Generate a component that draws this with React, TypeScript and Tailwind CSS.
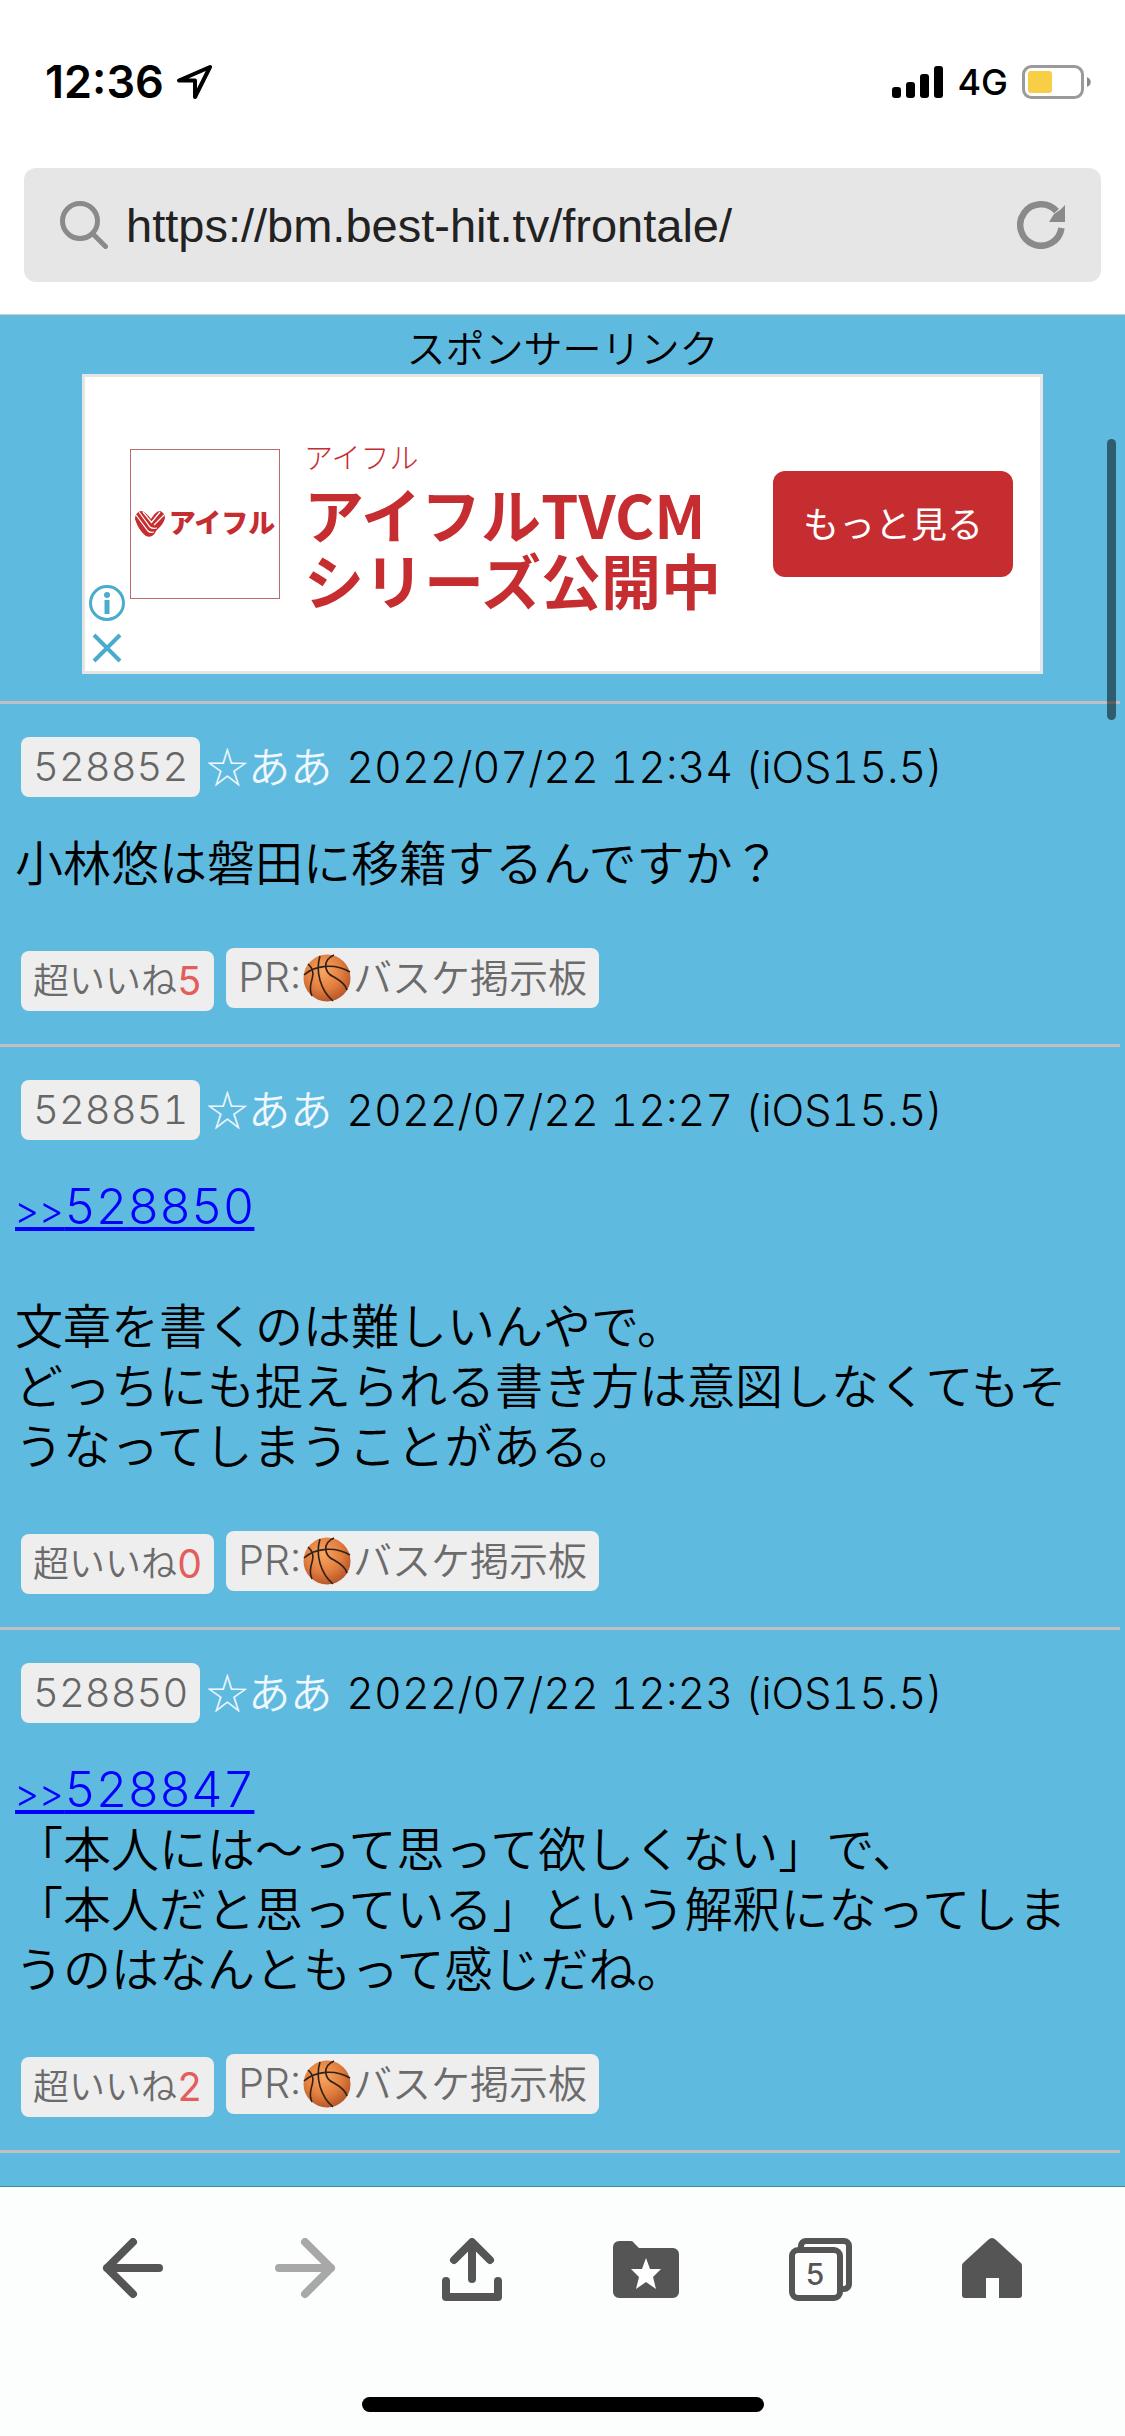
import type { ReactNode } from 'react'

type Post = {
  id: number
  name: string
  date: string
  device: string
  replyTo?: number
  body: string
  likes: number
}

const posts: Post[] = [
  {
    id: 528852,
    name: '☆ああ',
    date: '2022/07/22 12:34',
    device: 'iOS15.5',
    body: '小林悠は磐田に移籍するんですか？',
    likes: 5
  },
  {
    id: 528851,
    name: '☆ああ',
    date: '2022/07/22 12:27',
    device: 'iOS15.5',
    replyTo: 528850,
    body: '\n文章を書くのは難しいんやで。\nどっちにも捉えられる書き方は意図しなくてもそうなってしまうことがある。',
    likes: 0
  },
  {
    id: 528850,
    name: '☆ああ',
    date: '2022/07/22 12:23',
    device: 'iOS15.5',
    replyTo: 528847,
    body: '「本人には〜って思って欲しくない」で、\n「本人だと思っている」という解釈になってしまうのはなんともって感じだね。',
    likes: 2
  }
]

function Basketball() {
  return (
    <svg role="img" aria-label="バスケットボール" viewBox="0 0 48 48" className="mx-0.5 size-12 shrink-0">
      <defs>
        <radialGradient id="ball" cx="0.42" cy="0.35" r="0.65">
          <stop offset="0" stopColor="#f9a660" />
          <stop offset="0.6" stopColor="#e27e3e" />
          <stop offset="1" stopColor="#b9582a" />
        </radialGradient>
      </defs>
      <circle cx="24" cy="24" r="23.5" fill="url(#ball)" />
      <g fill="none" stroke="#2f2019" strokeWidth="1.6">
        <path d="M1 21C12 11 32 9 47 18" />
        <path d="M17 2C12 18 18 37 30 47" />
        <path d="M31 1C19 6 21 19 31 23C38 27 43 31 44 36" />
        <path d="M5 10C12 16 10 22 8 29C7 34 7 38 9 42" />
      </g>
    </svg>
  )
}

function StatusBar() {
  return (
    <div className="flex h-[168px] items-center justify-between pr-[34px] pb-1 pl-[45px] text-black">
      <div className="flex items-center gap-3">
        <span className="text-[45px] font-semibold">12:36</span>
        <svg viewBox="0 0 36 36" className="size-9" fill="none" stroke="currentColor" strokeWidth="4" strokeLinejoin="round">
          <path d="M34 3 3 16.5H19V33Z" />
        </svg>
      </div>
      <div className="flex items-center">
        <svg viewBox="0 0 51 32" className="h-8 w-[51px]" fill="currentColor">
          <rect x="0" y="21" width="9" height="11" rx="3" />
          <rect x="14" y="16" width="9" height="16" rx="3" />
          <rect x="28" y="8" width="9" height="24" rx="3" />
          <rect x="42" y="0" width="9" height="32" rx="3" />
        </svg>
        <span className="ml-3.5 text-[36px] font-medium">4G</span>
        <svg viewBox="0 0 69 34" className="ml-3.5 h-[34px] w-[69px]">
          <rect x="1.5" y="1.5" width="59" height="31" rx="8" fill="none" stroke="#9a9a9a" strokeWidth="3" />
          <rect x="6" y="6" width="24" height="22" rx="3" fill="#f7ce46" />
          <path d="M65 12c5 2 5 8 0 10z" fill="#8a8a8a" />
        </svg>
      </div>
    </div>
  )
}

function AddressBar() {
  return (
    <div className="mx-6 mb-8 flex h-[114px] items-center rounded-xl bg-[#e6e6e6] px-9 text-[#8a8a8a]">
      <svg viewBox="0 0 48 48" className="size-12 shrink-0" fill="none" stroke="currentColor" strokeWidth="5" strokeLinecap="round">
        <circle cx="20" cy="20" r="17.5" />
        <path d="m33 33 12.5 12.5" />
      </svg>
      <input
        type="text"
        aria-label="URL"
        defaultValue="https://bm.best-hit.tv/frontale/"
        className="ml-[18px] min-w-0 flex-1 bg-transparent pt-0.5 font-['Liberation_Sans',sans-serif] text-[47px] text-[#222] outline-none"
      />
      <button aria-label="再読み込み" className="shrink-0">
        <svg viewBox="0 0 48 48" className="size-12">
          <path d="M44.5 27A20.75 20.75 0 1 1 39.5 10.2" fill="none" stroke="currentColor" strokeWidth="6.5" />
          <path d="M48 4v17H32l5-8 6-4z" fill="currentColor" />
        </svg>
      </button>
    </div>
  )
}

function AifulMark() {
  return (
    <svg viewBox="0 0 30 26" className="h-[26px] w-[30px] shrink-0" fill="none">
      <path
        d="M6 0C2 1 0 4 0 8c2 7 6 13 11 17 2 1 4 1 6 0 2-1 3-3 4-5 4-4 8-8 9-13 0-3-2-6-5-7-3 0-6 3-9 8C13 4 9 0 6 0Z"
        fill="#c62d30"
      />
      <path d="M1 4 13 20q2 2 6 1M4 1 15 16q2 2 7 1M8 1 17 12M16 12 25 1M19 14 29 4" stroke="#fff" strokeWidth="1.2" />
    </svg>
  )
}

function AdBanner() {
  return (
    <section className="relative mx-[82px] flex h-[300px] items-center border-[3px] border-[#e5e5e5] bg-white pr-[27px] pl-[45px] font-['Noto_Sans_CJK_JP',sans-serif] text-[#c62d30]">
      <div className="flex size-[150px] shrink-0 items-center justify-center gap-1 border border-[#c0696c]">
        <AifulMark />
        <span className="pb-1 text-[27px] font-black">アイフル</span>
      </div>
      <div className="ml-6 flex-1 pb-0.5">
        <p className="mb-0.5 text-[29px] leading-[44px] font-light">アイフル</p>
        <p className="text-[60px] leading-[66px] font-bold whitespace-nowrap">
          アイフルTVCM
          <br />
          シリーズ公開中
        </p>
      </div>
      <button className="h-[106px] w-[240px] shrink-0 rounded-xl bg-[#c62d30] pb-1 text-[36px] text-white">もっと見る</button>
      <div className="absolute bottom-2 left-1 flex flex-col items-center gap-3 text-[#4aaccc]">
        <button aria-label="広告について">
          <svg viewBox="0 0 36 36" className="size-9" fill="none" stroke="currentColor">
            <circle cx="18" cy="18" r="16.5" strokeWidth="3" />
            <circle cx="18" cy="10" r="3" fill="currentColor" stroke="none" />
            <path d="M18 15v14" strokeWidth="5" />
          </svg>
        </button>
        <button aria-label="広告を閉じる">
          <svg viewBox="0 0 30 30" className="size-[30px]" fill="none" stroke="currentColor" strokeWidth="4">
            <path d="m2 2 26 26M28 2 2 28" />
          </svg>
        </button>
      </div>
    </section>
  )
}

function PostItem({ post }: { post: Post }) {
  return (
    <article className="mr-[5px] border-t-[3px] border-[#c0c0c0] pt-[33px] pb-[33px] font-[350] tabular-nums">
      <header className="flex h-[60px] items-center pl-[21px]">
        <button className="h-[60px] rounded-lg bg-[#eee] px-3 text-[40px] font-light text-[#666]">{post.id}</button>
        <span className="ml-1.5 pb-1.5 font-['Noto_Sans_CJK_JP',sans-serif] text-[42px] text-[#f0f8ff]">{post.name}</span>
        <time className="ml-3.5 text-[43px] font-light text-black">
          {post.date} ({post.device})
        </time>
      </header>

      <div className="mt-[37px] px-[15px] text-[48px] leading-[60px] whitespace-pre-wrap text-black">
        {post.replyTo && (
          <a href={`#${post.replyTo}`} className="block h-[60px] w-fit text-[49px] font-light text-[#00f] underline">
            <span className="text-[38px] leading-none">&gt;&gt;</span>
            {post.replyTo}
          </a>
        )}
        <p>{post.body}</p>
      </div>

      <footer className="mt-[54px] flex h-[63px] gap-3 pl-[21px] text-[#6b6b6b]">
        <button className="flex h-[60px] items-center self-end rounded-lg bg-[#eee] px-3 text-[36px]">
          超いいね<span className="text-[39px] font-normal text-[#e35d5b]">{post.likes}</span>
        </button>
        <a href="#basketball" className="flex h-[60px] items-center rounded-lg bg-[#eee] px-3 text-[39px]">
          <span className="text-[41px] font-light">PR:</span>
          <Basketball />
          <span>バスケ掲示板</span>
        </a>
      </footer>
    </article>
  )
}

function ToolButton({ label, disabled, children }: { label: string; disabled?: boolean; children: ReactNode }) {
  return (
    <button aria-label={label} disabled={disabled} className="flex flex-1 justify-center text-[#555] disabled:text-[#a8a8a8]">
      <svg viewBox="0 0 72 64" className="h-16 w-[72px]" fill="none" stroke="currentColor" strokeWidth="8" strokeLinecap="round" strokeLinejoin="round">
        {children}
      </svg>
    </button>
  )
}

function Toolbar() {
  return (
    <nav className="border-t border-[#4089a5] bg-[#fcfdfd] pb-6">
      <div className="flex px-[47px] pt-[51px]">
        <ToolButton label="戻る">
          <path d="M36 4 10 30l26 26M10 30h52" />
        </ToolButton>
        <ToolButton label="進む" disabled>
          <path d="m36 4 26 26-26 26M62 30H10" />
        </ToolButton>
        <ToolButton label="共有">
          <path d="M31 5v36M13 22 31 4l18 18M5 43v16h52V43" />
        </ToolButton>
        <ToolButton label="ブックマーク">
          <path
            d="M7 3h12q2 0 3 2L27 10h34a6 6 0 0 1 6 6v38a6 6 0 0 1-6 6H7a6 6 0 0 1-6-6V9a6 6 0 0 1 6-6Z"
            fill="currentColor"
            stroke="none"
          />
          <path d="m34 20 4 11h11l-8 8 3 12-10-7-10 7 3-12-8-8h11Z" fill="#fff" stroke="none" />
        </ToolButton>
        <ToolButton label="タブ">
          <g strokeWidth="6">
            <path d="M17 9V8a5 5 0 0 1 5-5h38a5 5 0 0 1 5 5v38a5 5 0 0 1-5 5h-2" />
            <rect x="8" y="12" width="48" height="48" rx="6" fill="#fcfdfd" />
          </g>
          <text x="31" y="47" fontSize="30" fontWeight="500" textAnchor="middle" fill="currentColor" stroke="none">
            5
          </text>
        </ToolButton>
        <ToolButton label="ホーム">
          <path
            d="M32 2q4-4 8 0L65 25q1 1 1 3v29a3 3 0 0 1-3 3H43V40H30v20H9a3 3 0 0 1-3-3V28q0-2 1-3Z"
            fill="currentColor"
            stroke="none"
          />
        </ToolButton>
      </div>
      <div className="mx-auto mt-[95px] h-[15px] w-[402px] rounded-full bg-black" />
    </nav>
  )
}

export default function App() {
  return (
    <div className="flex min-h-screen flex-col bg-white font-['Inter','Noto_Sans_CJK_JP',sans-serif]">
      <header className="border-b border-[#cfcfcf]">
        <StatusBar />
        <AddressBar />
      </header>

      <main className="relative flex-1 bg-[#5fbae0]">
        <p className="pt-2 text-center text-[39px] leading-[51px] font-[350] text-black">スポンサーリンク</p>
        <AdBanner />
        <div className="mt-[27px] [&>article:last-child]:border-b-[3px]">
          {posts.map((post) => (
            <PostItem key={post.id} post={post} />
          ))}
        </div>
        <div className="absolute top-[124px] right-[9px] h-[281px] w-[9px] rounded-full bg-black/50" />
      </main>

      <Toolbar />
    </div>
  )
}
